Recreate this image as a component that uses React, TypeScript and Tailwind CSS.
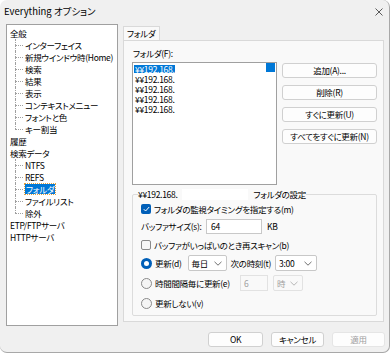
import React from 'react';

const TREE: { label: string; children?: string[] }[] = [
  {
    label: '全般',
    children: [
      'インターフェイス',
      '新規ウインドウ時(Home)',
      '検索',
      '結果',
      '表示',
      'コンテキストメニュー',
      'フォントと色',
      'キー割当',
    ],
  },
  { label: '履歴' },
  { label: '検索データ', children: ['NTFS', 'REFS', 'フォルダ', 'ファイルリスト', '除外'] },
  { label: 'ETP/FTPサーバ' },
  { label: 'HTTPサーバ' },
];

const SELECTED = 'フォルダ';

function Chevron({ color = '#606060' }: { color?: string }) {
  return (
    <svg width="8" height="5" viewBox="0 0 8 5" fill="none" stroke={color} strokeWidth="0.9">
      <path d="M0.5 0.8 L4 4.2 L7.5 0.8" />
    </svg>
  );
}

function Checkbox({ checked }: { checked?: boolean }) {
  return checked ? (
    <span className="flex h-[10px] w-[10px] shrink-0 items-center justify-center rounded-[2px] bg-[#005fb8]">
      <svg width="7" height="6" viewBox="0 0 7 6" fill="none" stroke="white" strokeWidth="1">
        <path d="M0.8 3.2 L2.6 5 L6.2 1" />
      </svg>
    </span>
  ) : (
    <span className="h-[10px] w-[10px] shrink-0 rounded-[2px] border border-[#8a8a8a] bg-[#f7f7f7]" />
  );
}

function Radio({ checked }: { checked?: boolean }) {
  return checked ? (
    <span className="flex h-[11px] w-[11px] shrink-0 items-center justify-center rounded-full bg-[#005fb8]">
      <span className="h-[5px] w-[5px] rounded-full bg-white" />
    </span>
  ) : (
    <span className="h-[11px] w-[11px] shrink-0 rounded-full border border-[#8a8a8a] bg-[#f5f5f5]" />
  );
}

function Button({ children, className = '' }: { children: React.ReactNode; className?: string }) {
  return (
    <div
      className={`flex h-[15px] items-center justify-center rounded-[3px] border border-[#d0d0d0] bg-[#fdfdfd] leading-none ${className}`}
    >
      {children}
    </div>
  );
}

export default function App() {
  return (
    <div className="h-[353px] w-[392px] whitespace-nowrap bg-white font-['Noto_Sans_CJK_JP',sans-serif] text-[8.5px] leading-none tracking-[-0.3px] text-black [font-feature-settings:'palt']">
      <div className="flex h-[353px] w-[390px] flex-col rounded-[7px] border-r border-b border-[#a8a8a8] bg-[#f0f0f0]">
        {/* title bar */}
        <div className="flex h-[24px] items-center justify-between pl-[4px] pr-[6px]">
          <span className="text-[9.5px] tracking-normal">Everything オプション</span>
          <svg width="8" height="8" viewBox="0 0 8 8" stroke="#333" strokeWidth="0.8">
            <path d="M0.5 0.5 L7.5 7.5 M7.5 0.5 L0.5 7.5" />
          </svg>
        </div>

        <div className="flex pl-[6px]">
          {/* tree */}
          <div className="h-[302px] w-[112px] border border-[#a0a0a0] bg-white pt-[2px]">
            {TREE.map((node) => (
              <div key={node.label}>
                <div className="flex h-[12px] items-center pl-[3px]">{node.label}</div>
                {node.children?.map((child, i) => {
                  const last = i === node.children!.length - 1;
                  return (
                    <div key={child} className="relative flex h-[12px] items-center pl-[18px]">
                      <span
                        className={`absolute left-[8px] top-0 w-0 border-l border-dotted border-[#a0a0a0] ${last ? 'h-[6px]' : 'h-[12px]'}`}
                      />
                      <span className="absolute left-[8px] top-[6px] w-[8px] border-t border-dotted border-[#a0a0a0]" />
                      {child === SELECTED ? (
                        <span className="bg-[#0078d7] px-[1px] py-[1px] text-white outline outline-1 outline-dotted outline-[#e0a040]">
                          {child}
                        </span>
                      ) : (
                        <span>{child}</span>
                      )}
                    </div>
                  );
                })}
              </div>
            ))}
          </div>

          {/* tab area */}
          <div className="ml-[5px] flex w-[261px] flex-col">
            <div className="mt-[2px] flex">
              <div className="flex h-[14px] w-[37px] items-center border-x border-t border-[#d9d9d9] bg-[#f9f9f9] pl-[3px]">
                フォルダ
              </div>
            </div>
            <div className="h-[282px] border border-[#d9d9d9] bg-[#f9f9f9] pl-[8px] pt-[6px]">
              <div className="flex h-[12px] items-center pl-[1px]">フォルダ(F):</div>
              <div className="mt-[3px] flex">
                <div className="relative h-[123px] w-[145px] border border-[#a0a0a0] bg-white pl-[1px] pt-[1px]">
                  <div className="flex h-[10px] items-center">
                    <span className="bg-[#0078d7] px-[1px] text-white">¥¥192.168.</span>
                  </div>
                  {[0, 1, 2, 3].map((i) => (
                    <div key={i} className="flex h-[10px] items-center px-[1px]">
                      ¥¥192.168.
                    </div>
                  ))}
                  <span className="absolute right-[1px] top-0 h-[9px] w-[9px] bg-[#0078d7]" />
                </div>
                <div className="ml-[5px] flex w-[95px] flex-col gap-[7px] pt-[1px]">
                  <Button>追加(A)...</Button>
                  <Button>削除(R)</Button>
                  <Button>すぐに更新(U)</Button>
                  <Button>すべてをすぐに更新(N)</Button>
                </div>
              </div>

              {/* group box */}
              <div className="relative mt-[9px] h-[122px] w-[245px] rounded-[2px] border border-[#dcdcdc] pl-[8px] pt-[7px]">
                <div className="absolute -top-[6px] left-[5px] flex h-[11px] items-center bg-[#f9f9f9]">
                  <span>¥¥192.168.</span>
                  <span className="mx-[5px] h-[11px] w-[66px] bg-white" />
                  <span>フォルダの設定</span>
                </div>

                <div className="flex h-[14px] items-center gap-[3px]">
                  <Checkbox checked />
                  <span>フォルダの監視タイミングを指定する(m)</span>
                </div>
                <div className="mt-[2px] flex h-[16px] items-center">
                  <span className="w-[65px]">バッファサイズ(s):</span>
                  <div className="flex h-[15px] w-[56px] items-center border border-[#c8c8c8] bg-white pl-[4px]">64</div>
                  <span className="ml-[5px]">KB</span>
                </div>
                <div className="mt-[4px] flex h-[14px] items-center gap-[3px]">
                  <Checkbox />
                  <span>バッファがいっぱいのとき再スキャン(b)</span>
                </div>
                <div className="mt-[3px] flex h-[16px] items-center">
                  <Radio checked />
                  <span className="ml-[3px]">更新(d)</span>
                  <div className="ml-[6px] flex h-[16px] w-[39px] items-center justify-between rounded-[2px] border border-[#c8c8c8] bg-white pl-[3px] pr-[4px]">
                    <span>毎日</span>
                    <Chevron />
                  </div>
                  <span className="ml-[4px]">次の時刻(t)</span>
                  <div className="ml-[4px] flex h-[16px] w-[42px] items-center justify-between rounded-[2px] border border-[#c8c8c8] bg-white pl-[3px] pr-[4px]">
                    <span>3:00</span>
                    <Chevron />
                  </div>
                </div>
                <div className="mt-[4px] flex h-[16px] items-center">
                  <Radio />
                  <span className="ml-[3px] w-[80px]">時間間隔毎に更新(e)</span>
                  <div className="ml-[5px] flex h-[16px] w-[28px] items-center border border-[#e2e2e2] bg-[#f9f9f9] pl-[3px] text-[#a0a0a0]">
                    6
                  </div>
                  <div className="ml-[5px] flex h-[16px] w-[30px] items-center justify-between rounded-[2px] border border-[#e2e2e2] bg-[#f9f9f9] pl-[3px] pr-[4px] text-[#a0a0a0]">
                    <span>時</span>
                    <Chevron color="#b0b0b0" />
                  </div>
                </div>
                <div className="mt-[5px] flex h-[14px] items-center">
                  <Radio />
                  <span className="ml-[3px]">更新しない(v)</span>
                </div>
              </div>
            </div>
          </div>
        </div>

        {/* dialog buttons */}
        <div className="mt-[6px] flex justify-end gap-[8px] pr-[4px]">
          <Button className="w-[55px] border-[#005fb8]">OK</Button>
          <Button className="w-[53px]">キャンセル</Button>
          <Button className="w-[53px] border-[#e5e5e5] bg-[#f5f5f5] text-[#a0a0a0]">適用</Button>
        </div>
      </div>
    </div>
  );
}
